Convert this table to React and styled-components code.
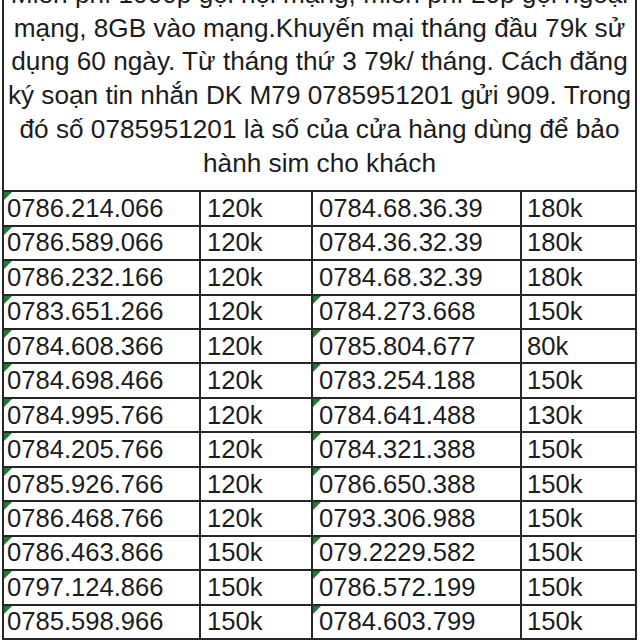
import React from "react";
import styled, { createGlobalStyle, css } from "styled-components";

const Global = createGlobalStyle`
  html, body { margin: 0; padding: 0; background: #fff; overflow: hidden; }
  body { font-family: "Liberation Sans", Arial, sans-serif; color: #1c1c1c; }
`;

const Sheet = styled.div`
  margin-left: 2px;
  border-left: 2px solid #262626;
  border-right: 2px solid #262626;
  box-sizing: border-box;
  width: 635px;
`;

const Header = styled.div`
  margin-top: -22px;
  padding-bottom: 10px;
  border-bottom: 2px solid #262626;
  text-align: center;
  font-size: 26.2px;
  line-height: 33.7px;
`;

const Line = styled.div`
  white-space: nowrap;
`;

const Grid = styled.div`
  display: grid;
  grid-template-columns: 197px 112px 209px 113px;
  grid-auto-rows: 34.46px;
`;

const Cell = styled.div`
  position: relative;
  box-sizing: border-box;
  border-bottom: 2px solid #262626;
  border-right: ${(p) => (p.$last ? "none" : "2px solid #262626")};
  display: flex;
  align-items: center;
  padding-left: ${(p) => p.$pad}px;
  font-size: 25.6px;
  white-space: nowrap;
  overflow: hidden;
  ${(p) =>
    p.$mark &&
    css`
      &::before {
        content: "";
        position: absolute;
        left: 0;
        top: 0;
        width: 0;
        height: 0;
        border-top: 8px solid #1f7a38;
        border-right: 8px solid transparent;
      }
    `}
`;

const rows = [
  ["0786.214.066", "120k", "0784.68.36.39", "180k"],
  ["0786.589.066", "120k", "0784.36.32.39", "180k"],
  ["0786.232.166", "120k", "0784.68.32.39", "180k"],
  ["0783.651.266", "120k", "0784.273.668", "150k"],
  ["0784.608.366", "120k", "0785.804.677", "80k"],
  ["0784.698.466", "120k", "0783.254.188", "150k"],
  ["0784.995.766", "120k", "0784.641.488", "130k"],
  ["0784.205.766", "120k", "0784.321.388", "150k"],
  ["0785.926.766", "120k", "0786.650.388", "150k"],
  ["0786.468.766", "120k", "0793.306.988", "150k"],
  ["0786.463.866", "150k", "079.2229.582", "150k"],
  ["0797.124.866", "150k", "0786.572.199", "150k"],
  ["0785.598.966", "150k", "0784.603.799", "150k"],
  ["", "", "", ""],
];

export default function App() {
  return (
    <>
      <Global />
      <Sheet>
        <Header>
          <Line>Miễn phí 1000p gọi nội mạng, miễn phí 20p gọi ngoại</Line>
          <Line>mạng, 8GB vào mạng.Khuyến mại tháng đầu 79k sử</Line>
          <Line>dụng 60 ngày. Từ tháng thứ 3 79k/ tháng. Cách đăng</Line>
          <Line>ký soạn tin nhắn DK M79 0785951201 gửi 909. Trong</Line>
          <Line>đó số 0785951201 là số của cửa hàng dùng để bảo</Line>
          <Line>hành sim cho khách</Line>
        </Header>
        <Grid>
          {rows.map((r, i) => (
            <React.Fragment key={i}>
              <Cell $pad={3} $mark>{r[0]}</Cell>
              <Cell $pad={6}>{r[1]}</Cell>
              <Cell $pad={6} $mark={i >= 3}>{r[2]}</Cell>
              <Cell $pad={5} $last>{r[3]}</Cell>
            </React.Fragment>
          ))}
        </Grid>
      </Sheet>
    </>
  );
}
